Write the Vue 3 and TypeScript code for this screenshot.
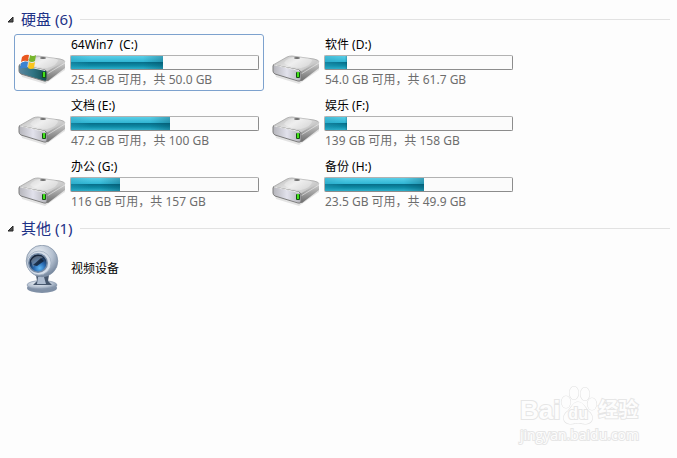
<script setup lang="ts">
import { ref } from 'vue'

interface Drive {
  name: string
  free: string
  total: string
  used: number
  system?: boolean
}

const drives: Drive[] = [
  { name: '64Win7\u00a0 (C:)', free: '25.4 GB', total: '50.0 GB', used: 49, system: true },
  { name: '软件 (D:)', free: '54.0 GB', total: '61.7 GB', used: 12 },
  { name: '文档 (E:)', free: '47.2 GB', total: '100 GB', used: 53 },
  { name: '娱乐 (F:)', free: '139 GB', total: '158 GB', used: 12 },
  { name: '办公 (G:)', free: '116 GB', total: '157 GB', used: 26 },
  { name: '备份 (H:)', free: '23.5 GB', total: '49.9 GB', used: 53 },
]

const selected = ref<string>(drives[0].name)
const drivesOpen = ref(true)
const othersOpen = ref(true)
</script>

<template>
  <main class="explorer">
    <svg class="defs" aria-hidden="true">
      <defs>
        <linearGradient id="driveTop" x1="0" y1="0" x2="1" y2="0.6">
          <stop offset="0" stop-color="#b0b0b0" />
          <stop offset="0.5" stop-color="#e8e8e8" />
          <stop offset="1" stop-color="#bcbcbc" />
        </linearGradient>
        <linearGradient id="driveFront" x1="0" y1="0" x2="1" y2="0">
          <stop offset="0" stop-color="#b4b4ba" />
          <stop offset="0.5" stop-color="#e2e2ec" />
          <stop offset="1" stop-color="#b2b2b8" />
        </linearGradient>
        <linearGradient id="driveFrontSystem" x1="0" y1="0" x2="1" y2="0">
          <stop offset="0" stop-color="#5c86a0" />
          <stop offset="0.5" stop-color="#2f7483" />
          <stop offset="1" stop-color="#124a4d" />
        </linearGradient>
        <linearGradient id="driveSide" x1="0" y1="0" x2="0" y2="1">
          <stop offset="0" stop-color="#d4d4d4" />
          <stop offset="1" stop-color="#6c6c6c" />
        </linearGradient>
        <radialGradient id="camShell" cx="0.4" cy="0.3" r="0.75">
          <stop offset="0" stop-color="#f0f4f9" />
          <stop offset="0.6" stop-color="#b3bfcf" />
          <stop offset="1" stop-color="#6c7e96" />
        </radialGradient>
        <radialGradient id="camLens" cx="0.6" cy="0.8" r="0.7">
          <stop offset="0" stop-color="#5fb8f5" />
          <stop offset="0.45" stop-color="#2a6cb4" />
          <stop offset="1" stop-color="#16253c" />
        </radialGradient>
      </defs>
    </svg>

    <section>
      <h2 class="group">
        <button class="toggle" type="button" :aria-expanded="drivesOpen" @click="drivesOpen = !drivesOpen">
          <svg class="arrow" viewBox="0 0 7 7" aria-hidden="true"><path d="M6 1v5H1z" fill="#505050" stroke="#262626" /></svg>
          <span>硬盘 (6)</span>
        </button>
      </h2>
      <div v-if="drivesOpen" class="tiles">
        <button
          v-for="drive in drives"
          :key="drive.name"
          type="button"
          class="tile"
          :class="{ selected: selected === drive.name }"
          @click="selected = drive.name"
        >
          <svg class="icon" viewBox="0 0 48 48" aria-hidden="true">
            <path d="M3 34l22 8 22-14v3L27 45 4 38z" fill="#000" opacity="0.1" />
            <path d="M1 26L15 18q2-1 5-1l22 3q5 1 5 3L28 34z" fill="url(#driveTop)" stroke="#a6a6a6" stroke-width="0.8" />
            <path d="M12 24q3-6 13-6 12 0 15 3 0 5-11 8-11 0-17-5z" fill="#fff" opacity="0.3" />
            <path d="M28 33l19-11v7L30 42q-2 0-2-3z" fill="url(#driveSide)" />
            <path d="M29 35l18-11" stroke="#eee" stroke-width="1" opacity="0.6" />
            <path
              d="M2 26l25 5q2 1 2 3v6q0 3-3 2L3 35q-2-1-2-3v-5q0-1 1-1z"
              :fill="drive.system ? 'url(#driveFrontSystem)' : 'url(#driveFront)'"
              stroke="#7c7c7c"
            />
            <path d="M2 26l25 5.500" stroke="#fff" stroke-width="1" opacity="0.8" />
            <rect x="24" y="33" width="4" height="6" rx="1" fill="#155215" />
            <rect x="25" y="33" width="2" height="5" fill="#43e01b" />
            <ellipse cx="25" cy="19" rx="3" ry="1" fill="#6e6e6e" />
            <g v-if="drive.system">
              <path d="M4 18q3-3 7-2l-1 6q-4-1-7 1z" fill="#e9571f" />
              <path d="M12 16q3 2 6 0l-1 6q-3 2-6 0z" fill="#78b62d" />
              <path d="M3 24q3-2 7-1l-1 6q-4-1-7 1z" fill="#3b83d2" />
              <path d="M11 23q3 2 6 0l-1 6q-3 2-6 0z" fill="#fbc51d" />
            </g>
          </svg>
          <span class="details">
            <span class="name">{{ drive.name }}</span>
            <span class="bar"><span class="fill" :style="{ width: drive.used + '%' }"></span></span>
            <span class="space">{{ drive.free }} 可用，共 {{ drive.total }}</span>
          </span>
        </button>
      </div>
    </section>

    <section>
      <h2 class="group">
        <button class="toggle" type="button" :aria-expanded="othersOpen" @click="othersOpen = !othersOpen">
          <svg class="arrow" viewBox="0 0 7 7" aria-hidden="true"><path d="M6 1v5H1z" fill="#505050" stroke="#262626" /></svg>
          <span>其他 (1)</span>
        </button>
      </h2>
      <div v-if="othersOpen" class="tiles">
        <button
          type="button"
          class="tile"
          :class="{ selected: selected === 'video' }"
          @click="selected = 'video'"
        >
          <svg class="icon" viewBox="0 0 48 48" aria-hidden="true">
            <ellipse cx="24" cy="43" rx="15" ry="5" fill="#8090a6" />
            <ellipse cx="24" cy="40" rx="15" ry="4.5" fill="url(#camShell)" stroke="#8c9bb0" stroke-width="0.7" />
            <path d="M18 30h13l-1 6 4 4H15l4-4z" fill="#46566c" />
            <path d="M20 32h6l2 7h-9z" fill="#aebccf" />
            <circle cx="24" cy="16" r="15.8" fill="url(#camShell)" stroke="#8796aa" stroke-width="0.8" />
            <circle cx="21" cy="18" r="12" fill="#d5dde8" stroke="#9aa9bc" stroke-width="0.7" />
            <circle cx="20" cy="18" r="10" fill="#748aa6" />
            <circle cx="20" cy="18" r="8.5" fill="url(#camLens)" />
            <path d="M13 16q4-7 12-4L15 22z" fill="#a8b8ca" opacity="0.45" />
            <path d="M15 20l8-7 3 3-7 5z" fill="#101a2a" opacity="0.75" />
          </svg>
          <span class="name">视频设备</span>
        </button>
      </div>
    </section>

    <aside class="watermark">
      <div class="brand">
        <span>Bai</span>
        <span class="paw">
          <svg viewBox="0 0 38 40" aria-hidden="true">
            <g fill="#fdfdfd" stroke="#e4e4e4" stroke-width="1.2">
              <ellipse cx="6" cy="17" rx="4.5" ry="6" />
              <ellipse cx="14" cy="8" rx="4.5" ry="6.5" />
              <ellipse cx="25" cy="9" rx="4.5" ry="6.5" />
              <ellipse cx="32" cy="19" rx="4.5" ry="6" />
              <path d="M18 17c5 0 7 5 10 9 6 4 6 12-2 13-3 0-4-1-8-1s-5 1-8 1c-8-1-8-9-2-13 4-4 5-9 10-9z" />
            </g>
          </svg>
          <span class="du">du</span>
        </span>
        <span class="cn">经验</span>
      </div>
      <div class="site">jingyan.baidu.com</div>
    </aside>
  </main>
</template>

<style>
body {
  background: #fdfdfd;
}
</style>

<style scoped>
.explorer {
  position: relative;
  box-sizing: border-box;
  min-height: 100vh;
  padding: 8px 7px 0 7px;
  background: #fdfdfd;
  color: #000;
  font-family: "Noto Sans", "Noto Sans CJK SC", sans-serif;
  font-size: 12px;
  line-height: 18px;
}

.defs {
  position: absolute;
  width: 0;
  height: 0;
}

button {
  margin: 0;
  padding: 0;
  border: 0;
  background: none;
  color: inherit;
  font: inherit;
  text-align: left;
}

.group {
  display: flex;
  align-items: center;
  gap: 8px;
  margin: 0 0 4px;
  font-size: 15px;
  font-weight: 400;
  line-height: 22px;
  color: #1e3287;
}

.group::after {
  content: "";
  flex: 1;
  height: 1px;
  background: #e2e2e2;
}

.toggle {
  display: flex;
  align-items: center;
  gap: 7px;
}

.arrow {
  width: 7px;
  height: 7px;
}

.tiles {
  display: grid;
  grid-template-columns: repeat(auto-fill, 250px);
  gap: 4px;
  margin: 0 0 4px 7px;
}

.tile {
  display: flex;
  align-items: center;
  gap: 4px;
  padding: 1px 4px 1px 3px;
  border: 1px solid transparent;
  border-radius: 3px;
}

.tile.selected {
  border-color: #7da2ce;
}

.icon {
  flex: none;
  width: 48px;
  height: 48px;
}

.details {
  display: flex;
  flex: 1;
  flex-direction: column;
  gap: 1px;
}

.name,
.space {
  padding-left: 1px;
  white-space: nowrap;
}

.space {
  color: #6d6d6d;
}

.bar {
  display: flex;
  box-sizing: border-box;
  height: 15px;
  border: 1px solid #b2b2b2;
  border-right-color: #8c8c8c;
  border-bottom-color: #8c8c8c;
  border-radius: 2px;
  background: #fbfbfb;
}

.fill {
  background:
    linear-gradient(90deg, rgba(38, 160, 190, 0.4), transparent 20px, transparent calc(100% - 20px), rgba(0, 60, 80, 0.3)),
    linear-gradient(#5bcfe8, #2fb5d3 46%, #07708b 50%, #0e8ba6 75%, #2fb0cb);
}

.watermark {
  position: absolute;
  right: 38px;
  bottom: 13px;
  color: #fdfdfd;
  -webkit-text-stroke: 2px #e6e6e6;
  paint-order: stroke fill;
}

.brand {
  display: flex;
  align-items: flex-end;
  font-family: "Liberation Sans", "Noto Sans CJK SC", sans-serif;
  font-size: 26px;
  font-weight: 700;
  line-height: 30px;
}

.paw {
  position: relative;
  width: 38px;
  height: 40px;
}

.paw svg {
  display: block;
  width: 38px;
  height: 40px;
}

.du {
  position: absolute;
  left: 8px;
  bottom: 2px;
  font-size: 16px;
  line-height: 18px;
}

.cn {
  font-size: 20px;
}

.site {
  font-family: "Open Sans", sans-serif;
  font-size: 14px;
  line-height: 20px;
}
</style>
